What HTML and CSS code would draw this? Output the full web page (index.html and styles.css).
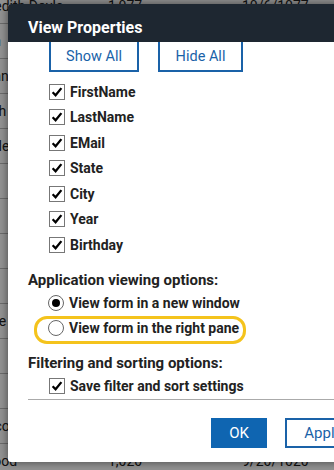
FILE: index.html
```html
<!DOCTYPE html>
<html lang="en">
<head>
    <meta charset="UTF-8">
    <meta name="viewport" content="width=device-width, initial-scale=1.0">
    <title>View Properties</title>
    <link rel="stylesheet" href="styles.css">
</head>
<body>
    <div class="grid">
        <div class="grid-row"><span class="c-name">Meredith Doyle</span><span class="c-num">1,077</span><span class="c-date">10/6/1077</span></div>
        <div class="grid-row"><span class="c-name">Joan</span><span class="c-num">1,012</span><span class="c-date">3/12/1012</span></div>
        <div class="grid-row"><span class="c-name">Logan</span><span class="c-num">1,034</span><span class="c-date">4/2/1034</span></div>
        <div class="grid-row"><span class="c-name">Smith</span><span class="c-num">1,056</span><span class="c-date">5/9/1056</span></div>
        <div class="grid-row"><span class="c-name">Castle</span><span class="c-num">1,061</span><span class="c-date">7/1/1061</span></div>
        <div class="grid-row"><span class="c-name">Gia</span><span class="c-num">1,043</span><span class="c-date">2/8/1043</span></div>
        <div class="grid-row"><span class="c-name">Ava</span><span class="c-num">1,019</span><span class="c-date">8/4/1019</span></div>
        <div class="grid-row"><span class="c-name">Blair</span><span class="c-num">1,088</span><span class="c-date">6/3/1088</span></div>
        <div class="grid-row"><span class="c-name">Ar</span><span class="c-num">1,025</span><span class="c-date">1/5/1025</span></div>
        <div class="grid-row"><span class="c-name">Noele</span><span class="c-num">1,031</span><span class="c-date">9/9/1031</span></div>
        <div class="grid-row"><span class="c-name">Dani</span><span class="c-num">1,047</span><span class="c-date">3/3/1047</span></div>
        <div class="grid-row"><span class="c-name">Pip</span><span class="c-num">1,052</span><span class="c-date">4/4/1052</span></div>
        <div class="grid-row"><span class="c-name">Marco</span><span class="c-num">1,066</span><span class="c-date">5/5/1066</span></div>
        <div class="grid-row"><span class="c-name">a Wood</span><span class="c-num">1,020</span><span class="c-date">9/20/1020</span></div>
    </div>
    <div class="overlay"></div>

    <div class="dialog">
        <div class="dialog-header">
            <h2>View Properties</h2>
        </div>

        <div class="dialog-body">
            <div class="toggle-buttons">
                <button class="btn-outline btn-show">Show All</button>
                <button class="btn-outline btn-hide">Hide All</button>
            </div>

            <ul class="field-list">
                <li class="check-row"><span class="checkbox"><svg viewBox="0 0 16 16"><path d="M3 8.2 L6.4 11.8 L13 3.6"/></svg></span>FirstName</li>
                <li class="check-row"><span class="checkbox"><svg viewBox="0 0 16 16"><path d="M3 8.2 L6.4 11.8 L13 3.6"/></svg></span>LastName</li>
                <li class="check-row"><span class="checkbox"><svg viewBox="0 0 16 16"><path d="M3 8.2 L6.4 11.8 L13 3.6"/></svg></span>EMail</li>
                <li class="check-row"><span class="checkbox"><svg viewBox="0 0 16 16"><path d="M3 8.2 L6.4 11.8 L13 3.6"/></svg></span>State</li>
                <li class="check-row"><span class="checkbox"><svg viewBox="0 0 16 16"><path d="M3 8.2 L6.4 11.8 L13 3.6"/></svg></span>City</li>
                <li class="check-row"><span class="checkbox"><svg viewBox="0 0 16 16"><path d="M3 8.2 L6.4 11.8 L13 3.6"/></svg></span>Year</li>
                <li class="check-row"><span class="checkbox"><svg viewBox="0 0 16 16"><path d="M3 8.2 L6.4 11.8 L13 3.6"/></svg></span>Birthday</li>
            </ul>

            <h3 class="section-title">Application viewing options:</h3>
            <ul class="option-list">
                <li class="radio-row"><span class="radio checked"></span>View form in a new window</li>
                <li class="radio-row highlighted"><span class="radio"></span>View form in the right pane</li>
            </ul>

            <h3 class="section-title filter-title">Filtering and sorting options:</h3>
            <ul class="option-list">
                <li class="check-row"><span class="checkbox"><svg viewBox="0 0 16 16"><path d="M3 8.2 L6.4 11.8 L13 3.6"/></svg></span>Save filter and sort settings</li>
            </ul>
        </div>

        <div class="dialog-footer">
            <button class="btn-primary">OK</button>
            <button class="btn-outline btn-apply">Apply</button>
        </div>
    </div>
</body>
</html>
```

FILE: styles.css
```css
body {
    font-family: Roboto, "Liberation Sans", sans-serif;
    margin: 0;
    padding: 0;
    background-color: #fff;
    color: #222;
    overflow: hidden;
}

/* table behind the dialog */
.grid {
    margin-top: -11px;
}

.grid-row {
    display: flex;
    align-items: center;
    height: 35px;
    border-bottom: 1px solid #bbb;
    box-sizing: border-box;
    font-size: 14px;
    color: #222;
    white-space: nowrap;
}

.c-name {
    width: 174px;
    margin-left: -66px;
    padding-left: 66px;
    text-indent: -30px;
    box-sizing: border-box;
    flex-shrink: 0;
}

.c-num {
    width: 134px;
    flex-shrink: 0;
}

.c-date {
    flex-shrink: 0;
}

.overlay {
    position: absolute;
    top: 0;
    left: 0;
    right: 0;
    bottom: 0;
    background: rgba(0, 0, 0, 0.42);
}

/* dialog */
.dialog {
    position: absolute;
    top: 4px;
    left: 8px;
    width: 367px;
    height: 458px;
    background: #fff;
    border-radius: 3px;
    box-shadow: 0 0 10px rgba(0, 0, 0, 0.55);
    display: flex;
    flex-direction: column;
    overflow: hidden;
}

.dialog-header {
    background-color: #1e2731;
    padding: 10px 20px 0;
    height: 38px;
    box-sizing: border-box;
    position: relative;
    z-index: 1;
}

.dialog-header h2 {
    margin: 0;
    font-size: 16px;
    font-weight: 700;
    line-height: 28px;
    color: #fff;
}

.dialog-body {
    height: 357px;
    padding: 0 20px;
    overflow: hidden;
    flex-shrink: 0;
}

.toggle-buttons {
    display: flex;
    gap: 19px;
    margin: -2px 0 0 21px;
}

button {
    font-family: Roboto, "Liberation Sans", sans-serif;
    font-size: 14.5px;
    height: 32px;
    box-sizing: border-box;
    cursor: pointer;
    padding: 0;
}

.btn-outline {
    background: #fff;
    color: #1a62a8;
    border: 2px solid #1a62a8;
}

.btn-show {
    width: 90px;
}

.btn-hide {
    width: 85px;
}

.field-list,
.option-list {
    list-style: none;
    margin: 0;
    padding: 0 0 0 21px;
}

.field-list {
    margin-top: 7px;
}

.check-row,
.radio-row {
    display: flex;
    align-items: center;
    gap: 5px;
    height: 25.5px;
    font-size: 14px;
    font-weight: 700;
    color: #222;
    white-space: nowrap;
}

.checkbox {
    width: 16px;
    height: 16px;
    border: 1px solid #777;
    box-sizing: border-box;
    background: #fff;
    flex-shrink: 0;
}

.checkbox svg {
    display: block;
    width: 14px;
    height: 14px;
}

.checkbox path {
    fill: none;
    stroke: #000;
    stroke-width: 2.6;
}

.section-title {
    margin: 12.5px 0 0;
    font-size: 15px;
    font-weight: 700;
    line-height: 20px;
    color: #222;
}

.filter-title {
    margin-top: 11.5px;
    margin-bottom: 1px;
}

.radio-row {
    position: relative;
}

.radio {
    width: 16px;
    height: 16px;
    margin-left: -1px;
    border: 1px solid #666;
    border-radius: 50%;
    box-sizing: border-box;
    display: flex;
    align-items: center;
    justify-content: center;
    flex-shrink: 0;
}

.radio.checked::before {
    content: "";
    width: 8px;
    height: 8px;
    border-radius: 50%;
    background: #000;
}

/* yellow annotation around the second option */
.highlighted::after {
    content: "";
    position: absolute;
    left: -15px;
    top: 0.5px;
    width: 212px;
    height: 28px;
    border: 3.5px solid #f4c31c;
    border-radius: 13px;
    box-sizing: border-box;
}

.dialog-footer {
    border-top: 1px solid #aaa;
    margin-left: 20px;
    padding: 18px 14px 0 0;
    display: flex;
    justify-content: flex-end;
    gap: 18px;
}

.dialog-footer button {
    height: 30px;
    font-size: 15px;
}

.btn-primary {
    width: 56px;
    background-color: #0f65b1;
    color: #fff;
    border: none;
}

.btn-apply {
    width: 76px;
}
```
